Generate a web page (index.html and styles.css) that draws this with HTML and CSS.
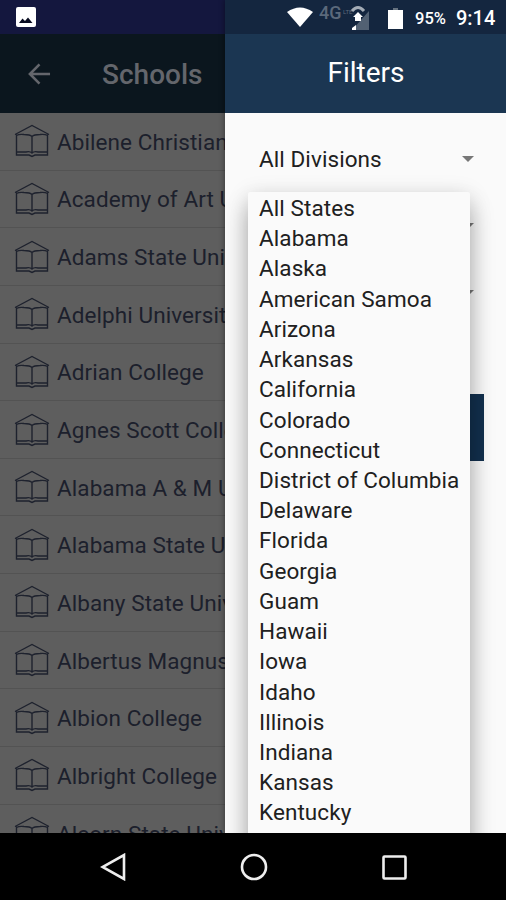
FILE: index.html
```html
<!DOCTYPE html>
<html lang="en">
<head>
<meta charset="utf-8">
<title>Schools</title>
<link rel="stylesheet" href="styles.css">
</head>
<body>
<svg class="defs" width="0" height="0" aria-hidden="true">
  <symbol id="school" viewBox="0 0 36 34">
    <path d="M1 10.500 18 1.500 35 10.500M2.500 10.500V31H15L18 32.500 21 31H33.500V10.500M2.500 11.500Q5 10 10 10.500 16 10.500 18 12.500 20 10.500 26 10.500 31 10 33.500 11.500M18 12.500V28.500M2.500 28H12Q16 27 18 29 20 27 24 28H33.500"/>
  </symbol>
</svg>
<div class="phone">
  <div class="screen">
    <section class="page">
      <div class="status status-left">
        <svg class="photo" viewBox="0 0 20 20"><rect width="20" height="20" rx="2" fill="#fff"/><path d="M3 16 6.500 11.500 9 14 12 10.500 16.500 16Z" fill="#080b20"/></svg>
      </div>
      <header class="bar bar-dim">
        <svg class="back" viewBox="0 0 24 22"><path d="M23 11H2M12 1 2 11 12 21"/></svg>
        <h1>Schools</h1>
      </header>
      <ul class="schools">
        <li><svg><use href="#school"/></svg><span>Abilene Christian University</span></li>
        <li><svg><use href="#school"/></svg><span>Academy of Art University</span></li>
        <li><svg><use href="#school"/></svg><span>Adams State University</span></li>
        <li><svg><use href="#school"/></svg><span>Adelphi University</span></li>
        <li><svg><use href="#school"/></svg><span>Adrian College</span></li>
        <li><svg><use href="#school"/></svg><span>Agnes Scott College</span></li>
        <li><svg><use href="#school"/></svg><span>Alabama A &amp; M University</span></li>
        <li><svg><use href="#school"/></svg><span>Alabama State University</span></li>
        <li><svg><use href="#school"/></svg><span>Albany State University</span></li>
        <li><svg><use href="#school"/></svg><span>Albertus Magnus College</span></li>
        <li><svg><use href="#school"/></svg><span>Albion College</span></li>
        <li><svg><use href="#school"/></svg><span>Albright College</span></li>
        <li><svg><use href="#school"/></svg><span>Alcorn State University</span></li>
      </ul>
    </section>
    <aside class="drawer">
      <div class="status status-right">
        <svg class="wifi" viewBox="0 0 26 20"><path d="M0 5Q13-4 26 5L13 20Z" fill="#fff"/></svg>
        <span class="network">4G</span><span class="lte">LTE</span>
        <svg class="signal" viewBox="0 0 20 25"><path d="M19 6V25H2Z" fill="#526173"/><path d="M2 6Q8-1 14 6" fill="none" stroke="#a4acb6" stroke-width="3"/><path d="M3 12 8 7 13 12H11V16H5V12Z" fill="#fff"/><path d="M2 25V23L6 20V25Z" fill="#fff"/></svg>
        <svg class="battery" viewBox="0 0 15 21"><path d="M5 0H10V2H5Z" fill="#66727f"/><path d="M0 2H15V21H0Z" fill="#fff"/></svg>
        <span class="percent">95%</span>
        <span class="clock">9:14</span>
      </div>
      <header class="bar bar-filters"><h2>Filters</h2></header>
      <div class="form">
        <div class="select"><span>All Divisions</span><i class="caret"></i></div>
        <div class="select"><i class="caret"></i></div>
        <div class="select"><i class="caret"></i></div>
        <div class="apply"></div>
        <ul class="menu">
          <li>All States</li><li>Alabama</li><li>Alaska</li><li>American Samoa</li><li>Arizona</li><li>Arkansas</li><li>California</li><li>Colorado</li><li>Connecticut</li><li>District of Columbia</li><li>Delaware</li><li>Florida</li><li>Georgia</li><li>Guam</li><li>Hawaii</li><li>Iowa</li><li>Idaho</li><li>Illinois</li><li>Indiana</li><li>Kansas</li><li>Kentucky</li>
        </ul>
      </div>
    </aside>
  </div>
  <nav class="nav">
    <svg viewBox="0 0 28 28"><path d="M24 2V26L2.500 14Z"/></svg>
    <svg viewBox="0 0 28 28"><circle cx="14" cy="14" r="12"/></svg>
    <svg viewBox="0 0 28 28"><rect x="3.500" y="3.500" width="22" height="22" rx="1"/></svg>
  </nav>
</div>
</body>
</html>
```
FILE: styles.css
```css
* { box-sizing: border-box; }
body { margin: 0; font-family: Roboto, "Liberation Sans", sans-serif; }
ul { list-style: none; margin: 0; padding: 0; }
h1, h2 { margin: 0; font-weight: 500; }
.defs { position: absolute; }
.phone { width: 506px; height: 900px; display: flex; flex-direction: column; overflow: hidden; background: #000; }
.screen { height: 833px; display: grid; grid-template-columns: 225px 281px; overflow: hidden; }

.page { overflow: hidden; background: #5e5e5e; }
.status { height: 34px; display: flex; align-items: center; }
.status-left { background: #14173e; padding-left: 16px; }
.photo { width: 20px; height: 20px; }
.bar { height: 79px; display: flex; align-items: center; }
.bar-dim { background: #0b161e; padding-left: 28px; color: #64666c; }
.back { width: 23px; height: 22px; fill: none; stroke: #64666c; stroke-width: 2.7; }
.bar-dim h1 { margin-left: 51px; padding-top: 2px; font-size: 28px; }
.schools li { height: 57.65px; display: flex; align-items: center; gap: 7px; padding-left: 14px; border-bottom: 1px solid #535353; white-space: nowrap; color: #1c202c; font-size: 22.5px; letter-spacing: .08px; }
.schools svg { flex: none; width: 36px; height: 34px; fill: none; stroke: #1e222e; stroke-width: 1.4; }
.schools span { padding-top: 1px; }

.drawer { display: flex; flex-direction: column; position: relative; min-height: 0; overflow: hidden; background: #fafafa; box-shadow: 0 0 6px rgba(0, 0, 0, .45); }
.status-right { background: #14263f; color: #fff; padding-left: 62px; }
.wifi { width: 26px; height: 20px; }
.network { width: 24px; margin: -10px 0 0 6px; font-size: 18px; font-weight: 500; color: #5b697b; }
.lte { width: 10px; margin-top: -11px; font-size: 6px; color: #5b697b; }
.signal { width: 20px; height: 25px; margin-left: -3px; }
.battery { width: 15px; height: 21px; margin: 2px 0 0 18px; }
.percent { margin: 2px 0 0 12px; font-size: 16.5px; font-weight: 500; }
.clock { margin: 2px 0 0 10px; font-size: 20px; font-weight: 500; }
.bar-filters { background: #1b3652; color: #fff; justify-content: center; }
.bar-filters h2 { font-size: 28px; font-weight: 400; padding: 0 0 3px 1px; }
.form { position: relative; flex: 1; padding: 12px 22px 0 34px; font-size: 22.5px; letter-spacing: .08px; color: #202020; }
.select { height: 67px; display: flex; align-items: center; padding-right: 10px; }
.caret { margin-left: auto; border: 6.5px solid transparent; border-top-color: #777; border-bottom: 0; }
.apply { height: 67px; margin-top: 68px; background: #12304e; }
.menu { position: absolute; left: 23px; top: 79px; width: 222px; height: 700px; padding-left: 11px; background: #fafafa; border-radius: 2px; box-shadow: 0 16px 24px rgba(0, 0, 0, .26), 0 4px 22px rgba(0, 0, 0, .15); }
.menu li { height: 30.22px; line-height: 32px; white-space: nowrap; }

.nav { height: 67px; display: flex; justify-content: center; align-items: center; gap: 112px; padding-left: 1px; }
.nav svg { width: 28px; height: 28px; fill: none; stroke: #eee; stroke-width: 2.6; }
```
